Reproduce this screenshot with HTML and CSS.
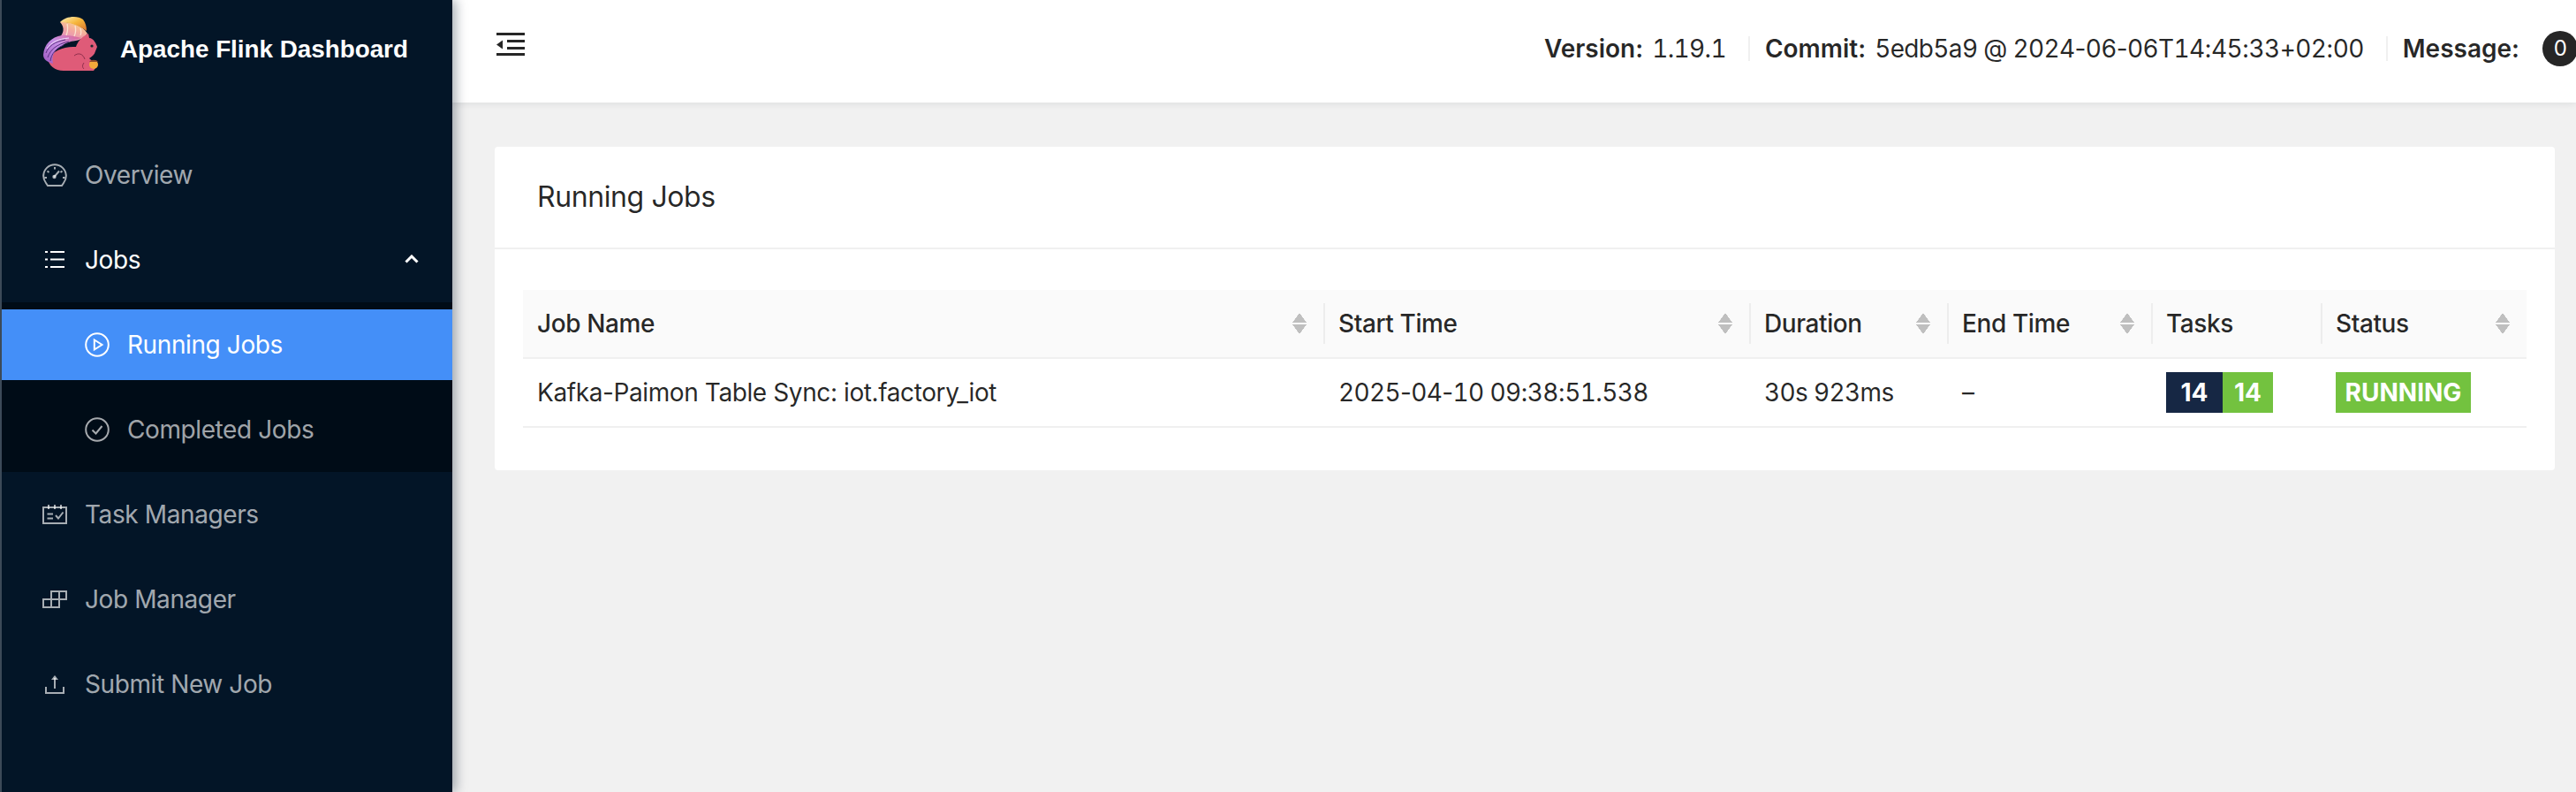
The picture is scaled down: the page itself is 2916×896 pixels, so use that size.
FILE: index.html
```html
<!DOCTYPE html>
<html lang="en">
<head>
    <meta charset="UTF-8">
    <title>Apache Flink Dashboard</title>
    <link rel="stylesheet" href="styles.css">
</head>
<body>
    <aside class="sidebar">
        <div class="logo">
            <svg class="logo-mark" viewBox="49 18 62 62">
                <defs>
                    <linearGradient id="tail" x1="0" y1="1" x2="1" y2="0">
                        <stop offset="0" stop-color="#9c58c0"/>
                        <stop offset="0.55" stop-color="#c690e6"/>
                        <stop offset="1" stop-color="#e0648c"/>
                    </linearGradient>
                    <linearGradient id="mid" x1="0" y1="1" x2="0.6" y2="0">
                        <stop offset="0" stop-color="#d98ad0"/>
                        <stop offset="0.6" stop-color="#f3a6a0"/>
                        <stop offset="1" stop-color="#f9cf8a"/>
                    </linearGradient>
                    <linearGradient id="top" x1="0" y1="0" x2="1" y2="1">
                        <stop offset="0" stop-color="#fff2c0"/>
                        <stop offset="0.5" stop-color="#f6b73c"/>
                        <stop offset="1" stop-color="#d9702c"/>
                    </linearGradient>
                </defs>
                <path fill="url(#mid)" d="M66 44C72 38 74 32 68 25C78 24 90 28 96 34L99 38C92 48 78 48 66 44Z"/>
                <path fill="url(#top)" d="M68 25C74 18 88 17 94 22C97 26 98 30 98 35C90 29 80 25 68 25Z"/>
                <path fill="#df5b78" d="M54 66C60 58 72 52 86 53C88 47 92 43 95 41L100 38L101 43C106 43 109 50 110 53L108 58C107 62 104 64 101 66L110 74L106 80H72C62 80 55 74 54 66Z"/>
                <path fill="url(#tail)" d="M49 62C50 50 58 42 70 40C78 39 86 42 92 43C84 46 74 48 70 52C62 56 58 62 60 72C54 70 49 68 49 62Z"/>
                <path fill="none" stroke="#4f2878" stroke-width="0.900" d="M52 60C55 52 62 47 74 45M54 65C57 56 64 50 78 47M57 69C58 61 64 54 72 51"/>
                <path fill="none" stroke="#f3e0ff" stroke-width="1" d="M53 55C58 48 66 44 78 43"/>
                <path fill="none" stroke="#fbe3d0" stroke-width="1.300" d="M75 40C77 35 77 31 76 27M84 41C86 37 86 33 85 29M91 40C92 38 92 35 91 32"/>
                <path fill="none" stroke="#8f2f4c" stroke-width="1" d="M84 63C89 59 94 61 96 67M95 78C93 76 93 74 95 71"/>
                <circle cx="104" cy="52" r="1.600" fill="#1d2a30"/>
                <circle cx="106" cy="73" r="5" fill="#f3a93a"/>
                <path fill="#8f4a2a" d="M101 70C103 67 109 67 111 70Z"/>
            </svg>
            <span class="logo-text">Apache Flink Dashboard</span>
        </div>
        <nav class="menu">
            <a class="menu-item">
                <svg class="icon" viewBox="0 0 28 28"><path d="M6 26H22L24 23A12.800 12.800 0 1 0 4 23Z"/><path d="M13 16.500L19 9.500M14 5V7.500M5.500 9.500L7.500 11M22.500 9.500L20.500 11M2.500 17H5M23 17H25.500"/><circle cx="13.500" cy="16" r="1.200"/></svg>
                Overview
            </a>
            <a class="menu-item open">
                <svg class="icon" viewBox="0 0 28 28"><path d="M9 5H25M9 13.500H25M9 22H25"/><path d="M3 5H6M3 13.500H6M3 22H6"/></svg>
                Jobs
                <svg class="chevron" viewBox="0 0 16 10"><path d="M1.500 8.500L8 2L14.500 8.500"/></svg>
            </a>
            <div class="submenu">
                <a class="menu-item sub active">
                    <svg class="icon" viewBox="0 0 28 28"><circle cx="14" cy="14" r="12.800"/><path d="M10.800 8.500L19.500 14L10.800 19.500Z"/></svg>
                    Running Jobs
                </a>
                <a class="menu-item sub">
                    <svg class="icon" viewBox="0 0 28 28"><circle cx="14" cy="14" r="12.800"/><path d="M8.500 14.500L12.500 18.500L19.500 10"/></svg>
                    Completed Jobs
                </a>
            </div>
            <a class="menu-item">
                <svg class="icon" viewBox="0 0 28 28"><path d="M1 6H27V24H1Z"/><path d="M7 3V8M14 3V8M21 3V8M5.500 13.500H12M5.500 18.500H12M15 15L18 18.500L23.500 11.500"/></svg>
                Task Managers
            </a>
            <a class="menu-item">
                <svg class="icon" viewBox="0 0 28 28"><path d="M1 14H19V23H1ZM10 14V23M10 14V5H27V14H19V5"/></svg>
                Job Manager
            </a>
            <a class="menu-item">
                <svg class="icon" viewBox="0 0 28 28"><path d="M14 7V19"/><path class="arrow" d="M10 9L14 4L18 9Z"/><path d="M4 17V24H24V17"/></svg>
                Submit New Job
            </a>
        </nav>
    </aside>
    <div class="main">
        <header class="header">
            <svg class="fold" viewBox="0 0 32 26"><path d="M0 1.500H32M12 9.500H32M12 17.500H32M0 24.500H32"/><path class="arrow" d="M0 13.500L7 8.500V18.500Z"/></svg>
            <div class="status-bar">
                <div class="status-item"><b>Version:</b><span class="num">1.19.1</span></div>
                <div class="status-item"><b>Commit:</b><span class="num">5edb5a9 @ 2024<i>-</i>06<i>-</i>06T14<i>:</i>45<i>:</i>33<i>+</i>02<i>:</i>00</span></div>
                <div class="status-item"><b>Message:</b><span class="count">0</span></div>
            </div>
        </header>
        <section class="card">
            <h2 class="card-title">Running Jobs</h2>
            <div class="card-body">
                <table class="jobs">
                    <colgroup>
                        <col class="col-name">
                        <col class="col-start">
                        <col class="col-duration">
                        <col class="col-end">
                        <col class="col-tasks">
                        <col class="col-status">
                    </colgroup>
                    <thead>
                        <tr>
                            <th><div class="th-inner">Job Name<span class="sorter"></span></div></th>
                            <th><div class="th-inner">Start Time<span class="sorter"></span></div></th>
                            <th><div class="th-inner">Duration<span class="sorter"></span></div></th>
                            <th><div class="th-inner">End Time<span class="sorter"></span></div></th>
                            <th><div class="th-inner">Tasks</div></th>
                            <th><div class="th-inner">Status<span class="sorter"></span></div></th>
                        </tr>
                    </thead>
                    <tbody>
                        <tr>
                            <td>Kafka-Paimon Table Sync: iot.factory_iot</td>
                            <td><span class="num">2025<i>-</i>04<i>-</i>10 09<i>:</i>38<i>:</i>51.538</span></td>
                            <td><span class="num">30s 923ms</span></td>
                            <td>&ndash;</td>
                            <td><span class="tag tag-total">14</span><span class="tag tag-green tag-done">14</span></td>
                            <td><span class="tag tag-green tag-status">RUNNING</span></td>
                        </tr>
                    </tbody>
                </table>
            </div>
        </section>
    </div>
</body>
</html>
```

FILE: styles.css
```css
* {
    box-sizing: border-box;
}

body {
    font-family: Inter, "Liberation Sans", sans-serif;
    font-size: 28px;
    letter-spacing: -0.4px;
    color: rgba(0, 0, 0, 0.85);
    background-color: #f1f1f1;
    margin: 0;
    height: 896px;
    overflow: hidden;
    display: flex;
}

/* digits are tabular, the punctuation between them is not */
.num {
    font-variant-numeric: tabular-nums;
    letter-spacing: -0.65px;
}

.num i {
    font-style: normal;
    font-variant-numeric: normal;
}

.sidebar {
    width: 512px;
    flex-shrink: 0;
    background-color: #031527;
    border-left: 2px solid #3c4a58;
    box-shadow: 4px 0 12px rgba(0, 21, 41, 0.35);
    position: relative;
    z-index: 2;
}

.logo {
    height: 150px;
    padding: 18px 0 0 47px;
    display: flex;
    align-items: flex-start;
    gap: 25px;
}

.logo-mark {
    width: 62px;
    height: 62px;
}

.logo-text {
    font-family: "Liberation Sans", Arial, sans-serif;
    font-weight: 700;
    font-size: 27.800px;
    letter-spacing: 0;
    color: #fff;
    line-height: 62px;
    margin-top: 7px;
}

.menu {
    padding-top: 8px;
}

.menu-item {
    height: 80px;
    margin-bottom: 16px;
    padding-left: 46px;
    display: flex;
    align-items: center;
    gap: 20px;
    color: rgba(255, 255, 255, 0.65);
}

.menu-item.open {
    color: #fff;
    margin-bottom: 8px;
    position: relative;
}

.icon {
    width: 28px;
    height: 28px;
    flex-shrink: 0;
    fill: none;
    stroke: currentColor;
    stroke-width: 2;
}

.icon .arrow {
    fill: currentColor;
    stroke: none;
}

.chevron {
    position: absolute;
    right: 38px;
    top: 34px;
    width: 16px;
    height: 10px;
    fill: none;
    stroke: currentColor;
    stroke-width: 3;
}

.submenu {
    background-color: #000c17;
    padding: 8px 0;
    margin-bottom: 8px;
}

.menu-item.sub {
    padding-left: 94px;
    margin-bottom: 16px;
}

.menu-item.sub:last-child {
    margin-bottom: 0;
}

.menu-item.active {
    background-color: #448ff8;
    color: #fff;
}

.main {
    flex: 1;
    min-width: 0;
}

.header {
    height: 116px;
    background-color: #fff;
    box-shadow: 0 2px 8px rgba(0, 21, 41, 0.08);
    padding-left: 50px;
    display: flex;
    align-items: flex-start;
    justify-content: space-between;
}

.fold {
    width: 32px;
    height: 26px;
    margin-top: 37px;
    fill: none;
    stroke: #262626;
    stroke-width: 3;
}

.fold .arrow {
    fill: #262626;
    stroke: none;
}

.status-bar {
    margin-top: 35px;
    height: 40px;
    display: flex;
    align-items: center;
    white-space: nowrap;
}

.status-item {
    display: flex;
    align-items: center;
    height: 28px;
    gap: 10px;
    padding: 0 25px 0 17px;
    border-left: 2px solid #f0f0f0;
}

.status-item:first-child {
    border-left: none;
}

.status-item:last-child {
    padding-right: 0;
}

.status-item b {
    font-weight: 600;
    letter-spacing: 0;
}

.count {
    width: 40px;
    height: 40px;
    border-radius: 20px;
    margin-left: 16px;
    margin-right: -2px;
    background-color: #262626;
    color: #fff;
    font-size: 24px;
    text-align: center;
    line-height: 40px;
}

.card {
    margin: 50px 24px 0 48px;
    height: 366px;
    background-color: #fff;
    border-radius: 4px;
}

.card-title {
    margin: 0;
    height: 116px;
    padding: 0 48px;
    font-size: 32px;
    font-weight: 400;
    line-height: 114px;
    border-bottom: 2px solid #f0f0f0;
}

.card-body {
    padding: 46px 32px 0;
}

.jobs {
    width: 100%;
    table-layout: fixed;
    border-collapse: separate;
    border-spacing: 0;
}

.col-name { width: 906px; }
.col-start { width: 482px; }
.col-duration { width: 224px; }
.col-end { width: 231px; }
.col-tasks { width: 192px; }
.col-status { width: 233px; }

.jobs th {
    height: 78px;
    padding: 0;
    background-color: #fafafa;
    border-bottom: 2px solid #f0f0f0;
    font-weight: 500;
    text-align: left;
}

.jobs th + th .th-inner {
    border-left: 2px solid #ededed;
    padding-left: 15px;
}

.th-inner {
    height: 46px;
    padding: 0 19px 0 16px;
    display: flex;
    align-items: center;
    justify-content: space-between;
}

.sorter {
    width: 16px;
    height: 24px;
    background:
        linear-gradient(to bottom right, transparent 49%, #bfbfbf 51%) left top / 8px 11px no-repeat,
        linear-gradient(to bottom left, transparent 49%, #bfbfbf 51%) right top / 8px 11px no-repeat,
        linear-gradient(to top right, transparent 49%, #bfbfbf 51%) left bottom / 8px 11px no-repeat,
        linear-gradient(to top left, transparent 49%, #bfbfbf 51%) right bottom / 8px 11px no-repeat;
}

.jobs td {
    height: 78px;
    padding: 0 17px;
    border-bottom: 2px solid #f0f0f0;
}

.jobs td:first-child {
    padding-left: 16px;
}

.tag {
    display: inline-block;
    height: 46px;
    font-size: 28px;
    font-weight: 700;
    letter-spacing: 0;
    line-height: 46px;
    text-align: center;
    color: #fff;
    vertical-align: middle;
}

.tag-total {
    width: 64px;
    background-color: #162744;
}

.tag-green {
    background-color: #73c23f;
}

.tag-done {
    width: 57px;
}

.tag-status {
    width: 153px;
}
```
